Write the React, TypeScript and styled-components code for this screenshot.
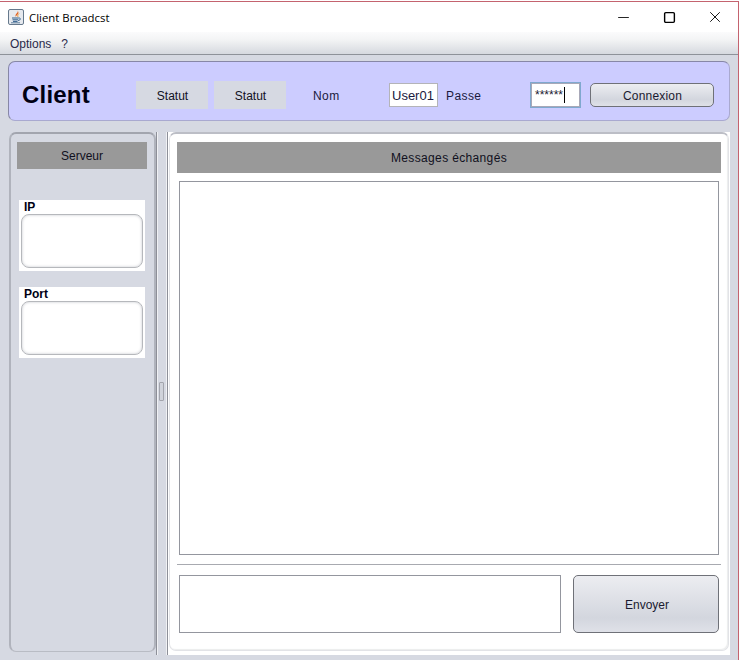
import React from "react";
import styled, { createGlobalStyle } from "styled-components";
import { Minus, Square, X } from "lucide-react";

const GlobalStyle = createGlobalStyle`
    html, body {
        margin: 0;
        padding: 0;
        background: #ffffff;
        font-family: "Liberation Sans", Arial, sans-serif;
    }
`;

const App = () => {
    return (
        <>
            <GlobalStyle />
            <StyledWindow>
                <StyledTitleBar>
                    <JavaIcon />
                    <StyledTitle>Client Broadcst</StyledTitle>
                    <StyledControls>
                        <StyledControl><Minus size={17} strokeWidth={1.2} /></StyledControl>
                        <StyledControl><Square size={13} strokeWidth={1.4} absoluteStrokeWidth /></StyledControl>
                        <StyledControl><X size={18} strokeWidth={1.2} /></StyledControl>
                    </StyledControls>
                </StyledTitleBar>
                <StyledMenuBar>
                    <span>Options</span>
                    <span>?</span>
                </StyledMenuBar>
                <StyledContent>
                    <StyledHeader>
                        <StyledBrand>Client</StyledBrand>
                        <StyledStatus>Statut</StyledStatus>
                        <StyledStatus>Statut</StyledStatus>
                        <StyledNameLabel>Nom</StyledNameLabel>
                        <StyledUserField>User01</StyledUserField>
                        <StyledPassLabel>Passe</StyledPassLabel>
                        <StyledPassField>******<StyledCaret /></StyledPassField>
                        <StyledConnect>Connexion</StyledConnect>
                    </StyledHeader>
                    <StyledBody>
                        <StyledSide>
                            <StyledSideTitle>Serveur</StyledSideTitle>
                            <StyledGroup>
                                <StyledGroupLabel>IP</StyledGroupLabel>
                                <StyledGroupField />
                            </StyledGroup>
                            <StyledGroup>
                                <StyledGroupLabel>Port</StyledGroupLabel>
                                <StyledGroupField />
                            </StyledGroup>
                        </StyledSide>
                        <StyledSplitter>
                            <StyledGrip />
                        </StyledSplitter>
                        <StyledMainWrap>
                            <StyledMain>
                                <StyledMainTitle>Messages échangés</StyledMainTitle>
                                <StyledMessages />
                                <StyledDivider />
                                <StyledComposer>
                                    <StyledInput />
                                    <StyledSend>Envoyer</StyledSend>
                                </StyledComposer>
                            </StyledMain>
                        </StyledMainWrap>
                    </StyledBody>
                </StyledContent>
            </StyledWindow>
        </>
    );
};

export default App;

const JavaIcon = () => (
    <StyledIcon viewBox="0 0 16 16">
        <rect x="0.5" y="0.5" width="15" height="15" rx="1.5" fill="#e6e9ee" stroke="#66798c" />
        <path d="M9.5 1.5 C11 4 6 5 8 8 C7.6 6 12.5 5 9.5 1.5 Z" fill="#e2601f" />
        <path d="M11 4.5 C9.8 5.5 9.4 6.6 10 8" fill="none" stroke="#ee9a3a" />
        <path d="M4 9 H10.5 M4.5 10.8 H10 M5 12.4 H9.5" stroke="#2f5f8c" strokeWidth="1" />
        <path d="M10.5 9 C13.2 8.8 13 11.2 10 11.4" fill="none" stroke="#2f5f8c" />
        <path d="M3 13.8 H12" stroke="#5f7f9e" />
    </StyledIcon>
);

const StyledWindow = styled.div`
    box-sizing: border-box;
    width: 739px;
    height: 659px;
    margin-top: 1px;
    display: flex;
    flex-direction: column;
    border-top: 1px solid #c4636f;
    border-right: 1px solid #c4636f;
    background: #d6d9e2;
    overflow: hidden;
`;

const StyledTitleBar = styled.div`
    height: 30px;
    flex: none;
    display: flex;
    align-items: center;
    padding-left: 8px;
    background: #ffffff;
`;

const StyledIcon = styled.svg`
    width: 16px;
    height: 16px;
    flex: none;
`;

const StyledTitle = styled.span`
    margin-left: 5px;
    font-family: "Open Sans", sans-serif;
    font-size: 11.4px;
    color: #000000;
`;

const StyledControls = styled.div`
    margin-left: auto;
    display: flex;
`;

const StyledControl = styled.div`
    width: 46px;
    height: 30px;
    display: flex;
    align-items: center;
    justify-content: center;
    color: #000000;
`;

const StyledMenuBar = styled.div`
    box-sizing: border-box;
    height: 23px;
    flex: none;
    display: flex;
    align-items: center;
    gap: 10px;
    padding: 2px 0 0 10px;
    border-bottom: 1px solid #8e9299;
    background: linear-gradient(#fbfbfc, #f3f4f5 35%, #d6d9df);
    font-size: 12px;
    color: #2a2a4a;
`;

const StyledContent = styled.div`
    flex: 1;
    min-height: 0;
    display: flex;
    flex-direction: column;
    padding: 6px 8px 0 8px;
`;

const StyledHeader = styled.div`
    box-sizing: border-box;
    height: 60px;
    flex: none;
    display: flex;
    align-items: center;
    padding: 8px 0 0 13px;
    border: 1px solid #a9a9d0;
    border-top-color: #8787a6;
    border-left-color: #8787a6;
    border-radius: 7px;
    background: #ccccff;
    font-size: 12px;
    color: #1a1a40;
`;

const StyledBrand = styled.div`
    width: 114px;
    flex: none;
    font-size: 24px;
    font-weight: 700;
    letter-spacing: 0.2px;
    color: #000014;
`;

const StyledStatus = styled.div`
    box-sizing: border-box;
    width: 72px;
    height: 28px;
    flex: none;
    margin-right: 6px;
    padding: 2px 0 0 1px;
    display: flex;
    align-items: center;
    justify-content: center;
    background: #d6d9e2;
    color: #111122;
`;

const StyledNameLabel = styled.span`
    width: 76px;
    flex: none;
    margin-left: 21px;
    padding-top: 2px;
    letter-spacing: 0.4px;
`;

const StyledUserField = styled.div`
    box-sizing: border-box;
    width: 49px;
    height: 24px;
    flex: none;
    padding-left: 2px;
    display: flex;
    align-items: center;
    border: 1px solid #b4b4b8;
    background: #ffffff;
    font-size: 13px;
`;

const StyledPassLabel = styled.span`
    width: 84px;
    flex: none;
    margin-left: 8px;
    padding-top: 2px;
    letter-spacing: 0.4px;
`;

const StyledPassField = styled.div`
    box-sizing: border-box;
    width: 51px;
    height: 26px;
    flex: none;
    padding-left: 3px;
    display: flex;
    align-items: center;
    border: 2px solid #7fa8cf;
    outline: 1px solid #a8a8b8;
    outline-offset: -2px;
    background: #ffffff;
    font-size: 12px;
    color: #1a1a30;
`;

const StyledCaret = styled.span`
    width: 1px;
    height: 16px;
    margin-left: 1px;
    background: #000000;
`;

const StyledConnect = styled.button`
    box-sizing: border-box;
    width: 124px;
    height: 24px;
    flex: none;
    margin-left: 9px;
    padding: 2px 0 0 1px;
    border: 1px solid #6f7178;
    border-radius: 5px;
    background: linear-gradient(#ecedf1, #d3d6de 70%, #dfe1e8);
    font-family: inherit;
    font-size: 12px;
    letter-spacing: 0.2px;
    color: #1a1a30;
`;

const StyledBody = styled.div`
    flex: 1;
    min-height: 0;
    display: flex;
    padding: 11px 0 5px 1px;
`;

const StyledSide = styled.div`
    box-sizing: border-box;
    width: 147px;
    flex: none;
    display: flex;
    flex-direction: column;
    margin-bottom: 3px;
    padding: 8px 7px 0 6px;
    border: 1px solid #b9bcc4;
    border-top: 2px solid #a2a5ae;
    border-left: 2px solid #b0b3bc;
    border-right: 2px solid #b0b3bc;
    border-radius: 7px;
    background: #d6d9e2;
    font-size: 12px;
`;

const StyledSideTitle = styled.div`
    height: 27px;
    flex: none;
    margin-bottom: 31px;
    display: flex;
    align-items: center;
    justify-content: center;
    background: #999999;
    color: #101020;
`;

const StyledGroup = styled.div`
    box-sizing: border-box;
    height: 71px;
    flex: none;
    margin: 0 2px 16px;
    padding: 0 2px 3px;
    display: flex;
    flex-direction: column;
    background: #ffffff;
`;

const StyledGroupLabel = styled.div`
    height: 14px;
    padding-left: 3px;
    font-weight: 700;
    line-height: 14px;
    color: #000014;
`;

const StyledGroupField = styled.div`
    flex: 1;
    border: 1px solid #b6b8bc;
    border-radius: 8px;
    background: #ffffff;
    box-shadow: inset 0 0 3px #c4c6cc;
`;

const StyledSplitter = styled.div`
    box-sizing: border-box;
    width: 12px;
    flex: none;
    display: flex;
    align-items: center;
    justify-content: center;
    border-left: 1px solid #8d8f98;
    border-right: 1px solid #8d8f98;
    box-shadow: inset 1px 0 0 #f0f1f4, inset -1px 0 0 #f0f1f4;
`;

const StyledGrip = styled.div`
    box-sizing: border-box;
    width: 5px;
    height: 19px;
    margin: 0 2px 5px 0;
    border: 1px solid #a3a5ad;
    border-radius: 1px;
    background: #d0d3db;
`;

const StyledMainWrap = styled.div`
    flex: 1;
    min-width: 0;
    display: flex;
    padding: 0 1px 4px 1px;
    background: #ffffff;
`;

const StyledMain = styled.div`
    box-sizing: border-box;
    flex: 1;
    min-width: 0;
    display: flex;
    flex-direction: column;
    padding: 8px 7px 0;
    border: 1px solid #e2e3e7;
    border-top: 2px solid #bcbec6;
    border-radius: 7px;
    background: #ffffff;
    box-shadow: inset -1px -1px 1px #eceded;
    font-size: 12px;
`;

const StyledMainTitle = styled.div`
    height: 31px;
    flex: none;
    display: flex;
    align-items: center;
    justify-content: center;
    background: #999999;
    letter-spacing: 0.35px;
    color: #101020;
`;

const StyledMessages = styled.div`
    height: 374px;
    flex: none;
    margin: 8px 2px 0;
    box-sizing: border-box;
    border: 1px solid #94969e;
    background: #ffffff;
`;

const StyledDivider = styled.div`
    height: 1px;
    flex: none;
    margin-top: 9px;
    background: #a8aab0;
`;

const StyledComposer = styled.div`
    height: 58px;
    flex: none;
    display: flex;
    gap: 12px;
    margin: 10px 2px 0;
`;

const StyledInput = styled.div`
    box-sizing: border-box;
    width: 382px;
    flex: none;
    border: 1px solid #94969e;
    background: #ffffff;
`;

const StyledSend = styled.button`
    box-sizing: border-box;
    flex: 1;
    padding: 2px 0 0 2px;
    border: 1px solid #6f7178;
    border-radius: 5px;
    background: linear-gradient(#ecedf1, #d3d6de 75%, #dfe1e8);
    font-family: inherit;
    font-size: 12px;
    color: #1a1a30;
`;
